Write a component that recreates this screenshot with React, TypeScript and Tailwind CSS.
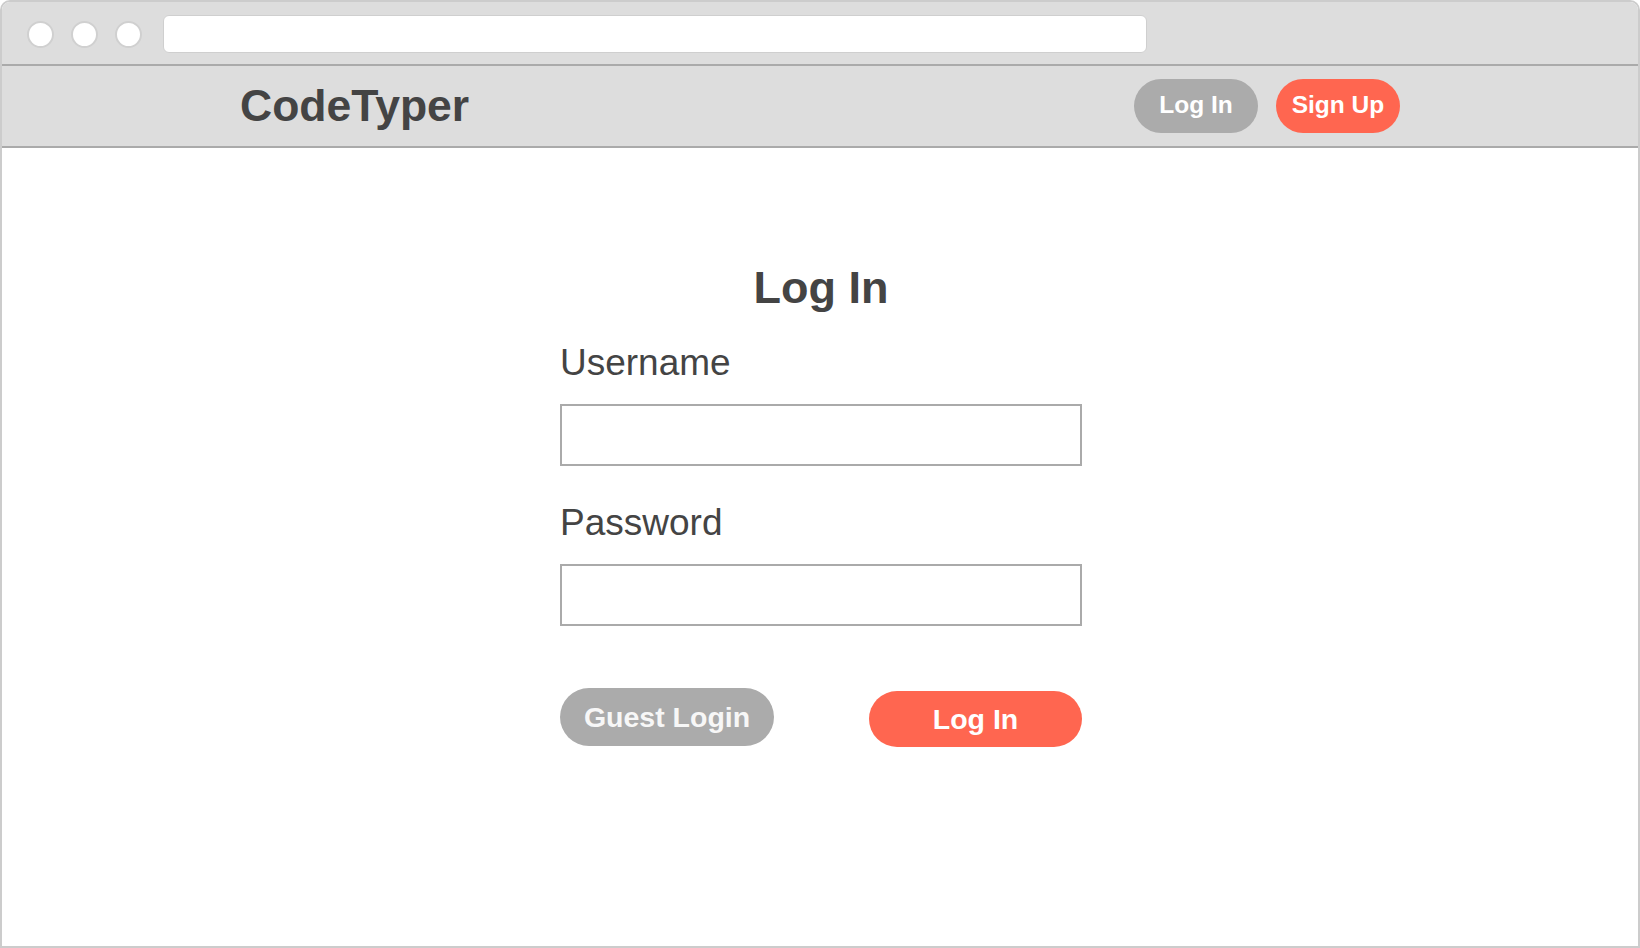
import React from "react";

const font = { fontFamily: '"Liberation Sans", Arial, sans-serif' };

const Dot: React.FC = () => (
  <div className="w-[27px] h-[27px] rounded-full bg-white border-2 border-[#d0d0d0]" />
);

const Field: React.FC<{ label: string; className?: string }> = ({ label, className }) => (
  <div className={className}>
    <label className="block text-[37px] leading-[42px] text-[#444]">{label}</label>
    <input
      type={label === "Password" ? "password" : "text"}
      className="mt-[20px] block w-full h-[62px] border-2 border-[#aaa] bg-white outline-none"
    />
  </div>
);

const App: React.FC = () => {
  return (
    <div
      style={font}
      className="w-[1640px] h-[948px] border-2 border-[#cccccc] rounded-t-[10px] overflow-hidden flex flex-col bg-white"
    >
      {/* browser chrome */}
      <div className="h-[64px] shrink-0 bg-[#dddddd] border-b-2 border-[#aaaaaa] flex items-center pl-[25px] pt-[2px]">
        <div className="flex items-center gap-[17px]">
          <Dot />
          <Dot />
          <Dot />
        </div>
        <div className="ml-[21px] w-[984px] h-[38px] rounded-[6px] bg-white border border-[#cfcfcf]" />
      </div>

      {/* nav */}
      <nav className="h-[82px] shrink-0 bg-[#dddddd] border-b-2 border-[#aaaaaa] flex items-center justify-between px-[238px]">
        <h1 className="text-[44.5px] font-bold text-[#444] leading-none">CodeTyper</h1>
        <div className="flex items-center gap-[18px] -mt-[1px]">
          <button className="w-[124px] h-[54px] rounded-full bg-[#ababab] text-white text-[24.5px] font-bold">
            Log In
          </button>
          <button className="w-[124px] h-[54px] rounded-full bg-[#ff6650] text-white text-[24.5px] font-bold">
            Sign Up
          </button>
        </div>
      </nav>

      {/* form */}
      <main className="flex-1 flex justify-center pt-[115px] pl-[2px]">
        <div className="w-[522px]">
          <h2 className="text-center text-[45px] leading-[50px] font-bold text-[#444]">Log In</h2>
          <Field label="Username" className="mt-[29px]" />
          <Field label="Password" className="mt-[36px]" />
          <div className="mt-[62px] flex items-start justify-between">
            <button className="w-[214px] h-[58px] rounded-full bg-[#ababab] text-[#f7f7f7] text-[28.5px] font-bold">
              Guest Login
            </button>
            <button className="mt-[3px] w-[213px] h-[56px] rounded-full bg-[#ff6650] text-white text-[28.5px] font-bold">
              Log In
            </button>
          </div>
        </div>
      </main>
    </div>
  );
};

export default App;
